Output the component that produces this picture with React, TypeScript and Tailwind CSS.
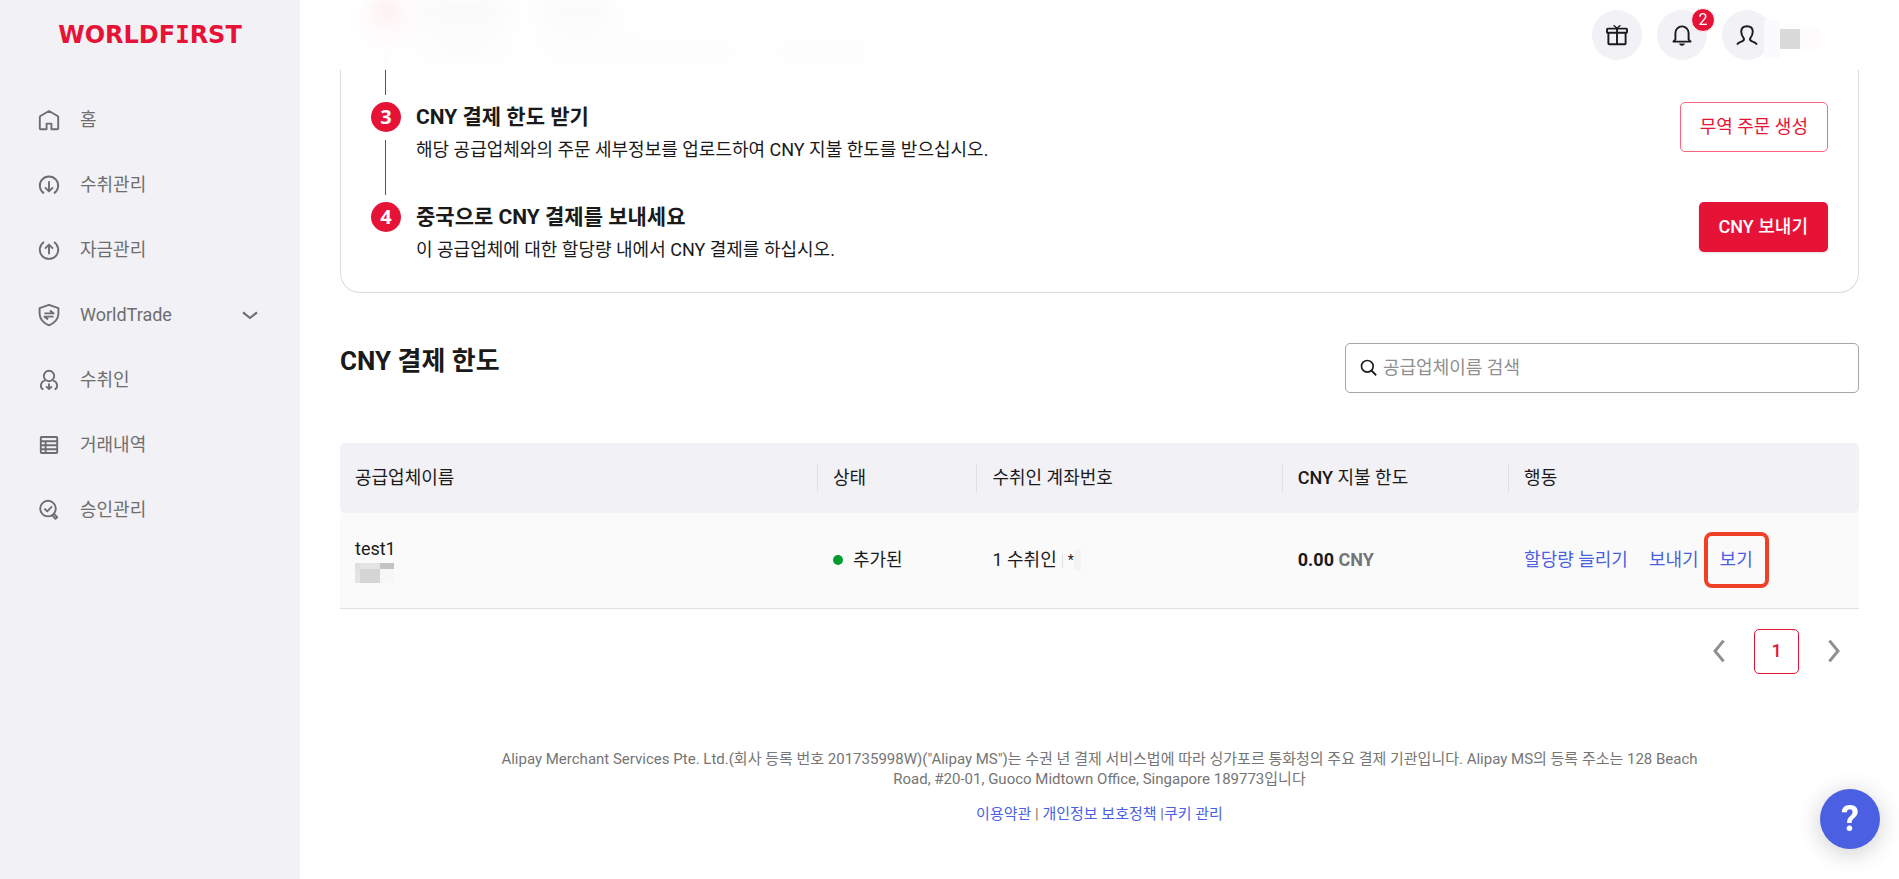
import { ReactNode } from "react";

const stroke = {
  fill: "none",
  stroke: "currentColor",
  strokeWidth: 1.9,
  strokeLinejoin: "round" as const,
};

function Icon({ children, className = "size-6" }: { children: ReactNode; className?: string }) {
  return (
    <svg viewBox="0 0 24 24" className={className} aria-hidden="true" {...stroke}>
      {children}
    </svg>
  );
}

const menu = [
  {
    label: "홈",
    icon: (
      <path d="M3.6 21.2H9.6V15.6H14.4V21.2H20.4Q21.2 21.2 21.2 20.4V9L20.6 8L12 3L3.4 8L2.8 9V20.4Q2.8 21.2 3.6 21.2Z" />
    ),
  },
  {
    label: "수취관리",
    icon: (
      <>
        <path d="M7 20.4A9.2 9.2 0 1 1 17 20.4" />
        <path d="M12 8.2V18.4M8 14.4L12 18.4L16 14.4" />
      </>
    ),
  },
  {
    label: "자금관리",
    icon: (
      <>
        <path d="M7 4A9.2 9.2 0 1 0 17 4" />
        <path d="M12 16.2V6.6M8 10.6L12 6.6L16 10.6" />
      </>
    ),
  },
  {
    label: "WorldTrade",
    expandable: true,
    icon: (
      <>
        <path d="M12 1.8L21.4 5.2V11Q21 18.4 12 22.4Q3 18.4 2.6 11V5.2Z" />
        <path d="M7.4 10.4H16.6L13 7.4M16.6 13.6H7.4L11 16.6" />
      </>
    ),
  },
  {
    label: "수취인",
    icon: (
      <>
        <circle cx="12" cy="8" r="5.2" />
        <path d="M8 12.6Q3.9 13.4 3.9 18Q3.9 20.8 6.4 21.2M16 12.6Q20.1 13.4 20.1 18Q20.1 20.8 17.6 21.2" />
        <path d="M12 15.4V21M9 18.4L12 21L15 18.4" />
      </>
    ),
  },
  {
    label: "거래내역",
    icon: (
      <>
        <rect x="3.8" y="4" width="16.4" height="16" rx="0.8" />
        <path d="M3.8 8.2H20.2M3.8 12.2H20.2M3.8 16.2H20.2M8.6 8.2V20" />
      </>
    ),
  },
  {
    label: "승인관리",
    icon: (
      <>
        <circle cx="11" cy="10.6" r="7.8" />
        <path d="M7.4 10.6L10.2 13.4L15 8.4" />
        <path d="M15.4 17.4L18.4 20.8L20.2 19.2L17 15.8" />
      </>
    ),
  },
];

function Sidebar() {
  return (
    <aside className="w-[300px] shrink-0 bg-[#f2f1f6]">
      <div className="flex h-[70px] items-center justify-center">
        <a href="#" className="font-['DejaVu_Sans',sans-serif] text-2xl font-bold text-[#e61337]">
          WORLDF<span className="font-['DejaVu_Sans_Mono',monospace]">I</span>RST
        </a>
      </div>
      <nav className="mt-[17px]">
        {menu.map((item) => (
          <a
            key={item.label}
            href="#"
            className="flex h-[65px] items-center gap-[19px] pl-[37px] pr-[38px] text-lg text-[#6e6e6e]"
          >
            <Icon>{item.icon}</Icon>
            <span className="grow">{item.label}</span>
            {item.expandable && (
              <Icon>
                <path d="M5 9.4L12 15L19 9.4" strokeWidth="2.2" />
              </Icon>
            )}
          </a>
        ))}
      </nav>
    </aside>
  );
}

function Header() {
  const round = "flex size-[50px] items-center justify-center rounded-full bg-[#f2f1f6] text-[#1a1a1a]";
  return (
    <header className="sticky top-0 z-10 -mb-[70px] flex h-[70px] items-center justify-end gap-[15px] bg-white/90 pr-[79px] backdrop-blur-lg">
      <button className={round} aria-label="gifts">
        <Icon>
          <rect x="2" y="5.6" width="20" height="4.2" rx="0.8" />
          <path d="M3.4 9.8V20.4Q3.4 21.2 4.2 21.2H19.8Q20.6 21.2 20.6 20.4V9.8M12 5.6V21.2" />
          <path d="M8.6 2.2L12 5.2L15.4 2.2" strokeWidth="1.3" />
        </Icon>
      </button>
      <button className={`${round} relative`} aria-label="notifications">
        <Icon>
          <path d="M3.4 18.6H20.6L18.6 16.4V10A6.6 6.6 0 0 0 5.4 10V16.4Z" />
          <path d="M9 20.4H15Q14.4 22.8 12 22.8Q9.6 22.8 9 20.4Z" fill="currentColor" stroke="none" />
        </Icon>
        <span className="absolute -right-2 -top-0.5 flex size-6 items-center justify-center rounded-full border border-white bg-[#e61337] text-base text-white">
          2
        </span>
      </button>
      <div className="flex items-center">
        <button className={round} aria-label="account">
          <Icon>
            <path d="M2 21.4Q3 19.8 7.4 18.2Q9.6 17.2 8.8 15.4Q6.2 12 6.2 8.6Q6.4 3.2 12 3.2Q17.6 3.2 17.8 8.6Q17.8 12 15.2 15.4Q14.4 17.2 16.6 18.2Q21 19.8 22 21.4" />
          </Icon>
        </button>
        <div className="relative -ml-2 flex items-center pt-2">
          <span className="h-[38px] w-4 bg-[#fbfbfd]" />
          <span className="size-5 bg-[#dadada]" />
          <span className="size-5 bg-[#fefbfc]" />
        </div>
      </div>
    </header>
  );
}

function Step({ no, title, text, action }: { no: number; title: ReactNode; text: string; action: ReactNode }) {
  return (
    <li className="flex h-[100px] items-start">
      <div className="flex h-full w-[30px] flex-col items-center">
        <span className="flex size-[30px] shrink-0 items-center justify-center rounded-full bg-[#e61337] font-['Noto_Sans',sans-serif] text-xl font-bold text-white">
          {no}
        </span>
        {no < 4 && <span className="mt-2 mr-px mb-[7px] w-px grow bg-[#e61337]" />}
      </div>
      <div className="grow pl-[15px]">
        <h3 className="text-[21px] leading-[30px] font-bold">{title}</h3>
        <p className="mt-[5px] text-lg leading-[26px]">{text}</p>
      </div>
      {action}
    </li>
  );
}

function Steps() {
  return (
    <section className="rounded-b-[20px] border border-t-0 border-[#dcdcdc] px-[30px] pt-0.5">
      {/* step that is scrolled under the header */}
      <div className="flex h-[100px]" aria-hidden="true">
        <div className="flex w-[30px] flex-col items-center">
          <span className="size-[30px] shrink-0 rounded-full bg-[#e61337] blur-[6px]" />
          <span className="mt-2 mr-px mb-[7px] w-px grow bg-[#e61337]" />
        </div>
        <div className="h-[68px] pl-[15px] blur-sm">
          <div className="flex gap-6 pt-1">
            <span className="h-4 w-24 rounded-full bg-[#9a9a9a]" />
            <span className="h-4 w-20 rounded-full bg-[#a8a8a8]" />
          </div>
          <div className="flex gap-6 pt-5">
            <span className="h-3 w-24 rounded-full bg-[#b0b0b0]" />
            <span className="h-3 w-52 rounded-full bg-[#b8b8b8]" />
            <span className="h-3 w-28 rounded-full bg-[#b8b8b8]" />
          </div>
        </div>
      </div>
      <ol className="-mb-[10px]">
        <Step
          no={3}
          title="CNY 결제 한도 받기"
          text="해당 공급업체와의 주문 세부정보를 업로드하여 CNY 지불 한도를 받으십시오."
          action={
            <button className="h-[50px] rounded-[5px] border border-[#f8657c] px-[19px] text-lg text-[#e61337]">
              무역 주문 생성
            </button>
          }
        />
        <Step
          no={4}
          title="중국으로 CNY 결제를 보내세요"
          text="이 공급업체에 대한 할당량 내에서 CNY 결제를 하십시오."
          action={
            <button className="h-[50px] rounded-[5px] bg-[#e61337] px-5 text-lg font-medium text-white shadow-sm">
              CNY 보내기
            </button>
          }
        />
      </ol>
    </section>
  );
}

function LimitTable() {
  return (
    <table className="mt-[50px] w-full table-fixed text-left text-lg">
      <colgroup>
        <col className="w-[31.4%]" />
        <col className="w-[10.5%]" />
        <col className="w-[20.1%]" />
        <col className="w-[14.9%]" />
        <col />
      </colgroup>
      <thead>
        <tr className="h-[70px]">
          <th className="rounded-l-[5px] bg-[#f2f1f6] pl-[15px] font-normal">공급업체이름</th>
          {["상태", "수취인 계좌번호"].map((label) => (
            <th key={label} className="bg-[#f2f1f6] font-normal">
              <div className="h-7 border-l border-[#e0e0e4] pl-[15px] leading-7">{label}</div>
            </th>
          ))}
          <th className="bg-[#f2f1f6] font-normal">
            <div className="h-7 border-l border-[#e0e0e4] pl-[15px] leading-7">
              <span className="font-medium">CNY</span> 지불 한도
            </div>
          </th>
          <th className="rounded-r-[5px] bg-[#f2f1f6] font-normal">
            <div className="h-7 border-l border-[#e0e0e4] pl-[15px] leading-7">행동</div>
          </th>
        </tr>
      </thead>
      <tbody>
        <tr className="h-[95px] border-b border-[#e0e0e0] bg-[#fafafa]">
          <td className="pl-[15px]">
            <div className="leading-6">test1</div>
            <div className="mt-0.5 grid h-5 w-[39px] grid-cols-[5px_20px_14px] grid-rows-[6px_14px]">
              <span className="bg-[#dedede]" />
              <span className="bg-[#e4e4e4]" />
              <span className="bg-[#c3c3c3]" />
              <span className="bg-[#e4e4e4]" />
              <span className="bg-[#d5d5d5]" />
              <span className="bg-[#f7f7f7]" />
            </div>
          </td>
          <td>
            <div className="flex items-center gap-[10px] pl-4">
              <span className="size-[10px] rounded-full bg-[#009a2e]" />
              추가된
            </div>
          </td>
          <td>
            <div className="flex items-center pl-4">
              1 수취인
              <span className="mx-[5px] h-[15px] w-px bg-[#e2e2e2]" />
              <span className="text-sm">*</span>
              <span className="h-5 w-[7px] bg-[#f3f3f3]" />
            </div>
          </td>
          <td className="pl-4 font-bold">
            0.00 <span className="text-[#757575]">CNY</span>
          </td>
          <td>
            <div className="flex gap-[21px] pl-4 text-[#4a5fe2]">
              <a href="#">할당량 늘리기</a>
              <a href="#">보내기</a>
              <a href="#" className="relative">
                보기
                <span className="absolute -inset-x-4 -inset-y-3.5 rounded-lg border-4 border-[#f04025]" />
              </a>
            </div>
          </td>
        </tr>
      </tbody>
    </table>
  );
}

function Pagination() {
  return (
    <div className="mt-5 flex items-center justify-end gap-[23px] pr-[13px] text-[#8f8f8f]">
      <button aria-label="previous">
        <Icon>
          <path d="M16.6 1.6L8 12L16.6 22.4" strokeWidth="3" strokeLinejoin="miter" />
        </Icon>
      </button>
      <button className="size-[45px] rounded-[5px] border border-[#e61337] text-lg font-medium text-[#e61337]">
        1
      </button>
      <button aria-label="next">
        <Icon>
          <path d="M7.4 1.6L16 12L7.4 22.4" strokeWidth="3" strokeLinejoin="miter" />
        </Icon>
      </button>
    </div>
  );
}

export default function App() {
  return (
    <div className="flex min-h-screen bg-white font-['Roboto','Noto_Sans_CJK_KR',sans-serif] text-[#1a1a1a]">
      <Sidebar />
      <div className="min-w-0 grow">
        <Header />
        <main className="px-10">
          <Steps />

          <div className="mt-[50px] flex items-start justify-between">
            <h2 className="text-[26px] leading-9 font-bold">CNY 결제 한도</h2>
            <label className="flex h-[50px] w-[514px] items-center gap-1 rounded-[5px] border border-[#a6a6a6] px-[13px]">
              <Icon className="size-5">
                <circle cx="10" cy="10" r="7" strokeWidth="2" />
                <path d="M15 15L20.6 20.8" strokeWidth="2.2" />
              </Icon>
              <input
                type="text"
                aria-label="공급업체이름 검색"
                placeholder="공급업체이름 검색"
                className="min-w-0 grow text-lg outline-none placeholder:text-[#8f8f8f]"
              />
            </label>
          </div>

          <LimitTable />
          <Pagination />
        </main>

        <footer className="mt-[75px] px-10 pb-12 text-center text-[15px] leading-5 text-[#757575]">
          <p className="mx-auto w-4/5">
            Alipay Merchant Services Pte. Ltd.(회사 등록 번호 201735998W)("Alipay MS")는 수권 년 결제 서비스법에 따라
            싱가포르 통화청의 주요 결제 기관입니다. Alipay MS의 등록 주소는 128 Beach Road, #20-01, Guoco Midtown Office,
            Singapore 189773입니다
          </p>
          <p className="mt-[15px]">
            <a href="#" className="text-[#4a5fe2]">이용약관</a> |{" "}
            <a href="#" className="text-[#4a5fe2]">개인정보 보호정책</a> |
            <a href="#" className="text-[#4a5fe2]">쿠키 관리</a>
          </p>
        </footer>
      </div>

      <button className="fixed right-[19px] bottom-[30px] size-[60px] rounded-full bg-[#4a5fe2] text-4xl font-bold text-white shadow-[0_4px_24px_rgba(0,0,0,0.2)]">
        ?
      </button>
    </div>
  );
}
